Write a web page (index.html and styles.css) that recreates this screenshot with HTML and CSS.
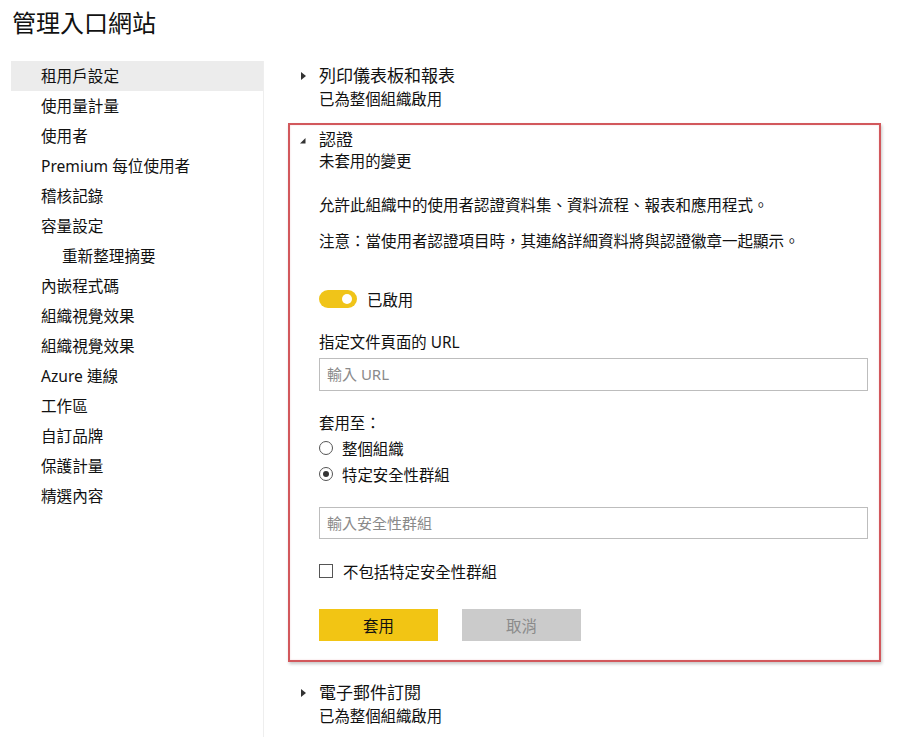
FILE: index.html
```html
<!DOCTYPE html>
<html lang="zh-Hant">
<head>
<meta charset="utf-8">
<title>管理入口網站</title>
<link rel="stylesheet" href="styles.css">
</head>
<body>
<h1 class="page-title">管理入口網站</h1>
<div class="layout">
  <nav class="sidebar">
    <ul class="nav-list">
      <li class="nav-item active">租用戶設定</li>
      <li class="nav-item">使用量計量</li>
      <li class="nav-item">使用者</li>
      <li class="nav-item">Premium 每位使用者</li>
      <li class="nav-item">稽核記錄</li>
      <li class="nav-item">容量設定</li>
      <li class="nav-item sub">重新整理摘要</li>
      <li class="nav-item">內嵌程式碼</li>
      <li class="nav-item">組織視覺效果</li>
      <li class="nav-item">組織視覺效果</li>
      <li class="nav-item">Azure 連線</li>
      <li class="nav-item">工作區</li>
      <li class="nav-item">自訂品牌</li>
      <li class="nav-item">保護計量</li>
      <li class="nav-item">精選內容</li>
    </ul>
  </nav>

  <main class="content">
    <section class="setting">
      <div class="setting-head">
        <svg class="caret" width="19" height="24" viewBox="0 0 19 24"><path d="M1 8 L6 12 L1 16 Z" fill="#333"/></svg>
        <span class="setting-title">列印儀表板和報表</span>
      </div>
      <div class="setting-sub">已為整個組織啟用</div>
    </section>

    <section class="setting setting-open">
      <div class="setting-head">
        <svg class="caret" width="19" height="22" viewBox="0 0 19 22"><path d="M0 14.5 L5.5 14.5 L5.5 9 Z" fill="#333"/></svg>
        <span class="setting-title">認證</span>
      </div>
      <div class="setting-sub">未套用的變更</div>

      <div class="setting-body">
        <p class="desc">允許此組織中的使用者認證資料集、資料流程、報表和應用程式。</p>
        <p class="desc note">注意：當使用者認證項目時，其連絡詳細資料將與認證徽章一起顯示。</p>

        <div class="toggle-row">
          <span class="toggle"><span class="knob"></span></span>
          <span class="toggle-label">已啟用</span>
        </div>

        <label class="field-label">指定文件頁面的 URL</label>
        <div class="text-input">輸入 URL</div>

        <div class="field-label apply-label">套用至：</div>
        <div class="radio-row"><span class="radio"></span><span>整個組織</span></div>
        <div class="radio-row"><span class="radio checked"></span><span>特定安全性群組</span></div>

        <div class="text-input group-input">輸入安全性群組</div>

        <div class="check-row"><span class="checkbox"></span><span>不包括特定安全性群組</span></div>

        <div class="actions">
          <span class="btn btn-primary">套用</span>
          <span class="btn btn-disabled">取消</span>
        </div>
      </div>
    </section>

    <section class="setting setting-last">
      <div class="setting-head">
        <svg class="caret" width="19" height="24" viewBox="0 0 19 24"><path d="M1 8 L6 12 L1 16 Z" fill="#333"/></svg>
        <span class="setting-title">電子郵件訂閱</span>
      </div>
      <div class="setting-sub">已為整個組織啟用</div>
    </section>
  </main>
</div>
</body>
</html>
```

FILE: styles.css
```css
* { box-sizing: border-box; }

html, body {
  margin: 0;
  padding: 0;
  background: #ffffff;
  color: #111111;
  font-family: "Noto Sans", "Noto Sans CJK TC", sans-serif;
}

.page-title {
  margin: 8px 0 0 12px;
  font-size: 24px;
  line-height: 30px;
  font-weight: 400;
  color: #111111;
}

.layout {
  display: flex;
  margin-top: 23px;
  min-height: 676px;
}

/* left navigation */
.sidebar {
  width: 264px;
  flex: 0 0 264px;
  padding-left: 11px;
  border-right: 1px solid #eeeeee;
}

.nav-list {
  list-style: none;
  margin: 0;
  padding: 0;
}

.nav-item {
  height: 30px;
  line-height: 30px;
  padding-left: 30px;
  font-size: 15.6px;
  color: #111111;
  white-space: nowrap;
}

.nav-item.active { background: #ececec; }
.nav-item.sub { padding-left: 51px; }

/* settings column */
.content {
  flex: 1;
  padding: 3px 24px 0 24px;
}

.setting { padding-left: 12px; }

.setting-head {
  display: flex;
  align-items: center;
  height: 24px;
}

.caret { flex: 0 0 19px; display: block; }

.setting-title {
  font-size: 17px;
  line-height: 24px;
}

.setting-sub {
  padding-left: 19px;
  font-size: 15.4px;
  line-height: 24px;
}

.setting-open {
  margin-top: 11px;
  padding: 4px 11px 19px 10px;
  border: 2px solid #d2585c;
  box-shadow: 1px 2px 3px rgba(0, 0, 0, 0.22), inset 0 0 2px rgba(210, 88, 92, 0.25);
}

.setting-open .setting-head,
.setting-open .setting-sub { height: 22px; line-height: 22px; }

.setting-body { padding-left: 19px; }

.desc {
  margin: 21px 0 0 0;
  font-size: 15.5px;
  line-height: 22px;
}

.desc.note { margin-top: 14px; }

/* enabled switch */
.toggle-row {
  display: flex;
  align-items: center;
  margin-top: 37px;
  height: 20px;
}

.toggle {
  position: relative;
  width: 38px;
  height: 18px;
  border-radius: 9px;
  background: #f0c419;
}

.knob {
  position: absolute;
  right: 5px;
  top: 4px;
  width: 10px;
  height: 10px;
  border-radius: 50%;
  background: #ffffff;
}

.toggle-label {
  margin-left: 10px;
  font-size: 15.4px;
}

.field-label {
  display: block;
  margin-top: 23px;
  font-size: 15.4px;
  line-height: 22px;
}

.text-input {
  margin-top: 4px;
  height: 33px;
  border: 1px solid #bdbdbd;
  padding-left: 7px;
  line-height: 31px;
  font-size: 15px;
  color: #8a8a8a;
}

.apply-label { margin-top: 22px; }

.radio-row,
.check-row {
  display: flex;
  align-items: center;
  height: 26px;
  font-size: 15.4px;
}

.radio {
  position: relative;
  width: 14px;
  height: 14px;
  margin-right: 9px;
  border: 1px solid #555;
  border-radius: 50%;
  background: #fff;
}

.radio.checked::after {
  content: "";
  position: absolute;
  left: 3px;
  top: 3px;
  width: 6px;
  height: 6px;
  border-radius: 50%;
  background: #333;
}

.group-input {
  margin-top: 20px;
  height: 32px;
  line-height: 30px;
}

.check-row {
  margin-top: 20px;
  height: 24px;
}

.checkbox {
  width: 14px;
  height: 14px;
  margin-right: 10px;
  border: 1px solid #555;
  background: #fff;
}

.actions {
  display: flex;
  gap: 24px;
  margin-top: 26px;
}

.btn {
  display: flex;
  align-items: center;
  justify-content: center;
  width: 119px;
  height: 32px;
  font-size: 15.4px;
}

.btn-primary { background: #f2c514; color: #111111; }
.btn-disabled { background: #cbcbcb; color: #8a8a8a; }

.setting-last { margin-top: 19px; }
```
